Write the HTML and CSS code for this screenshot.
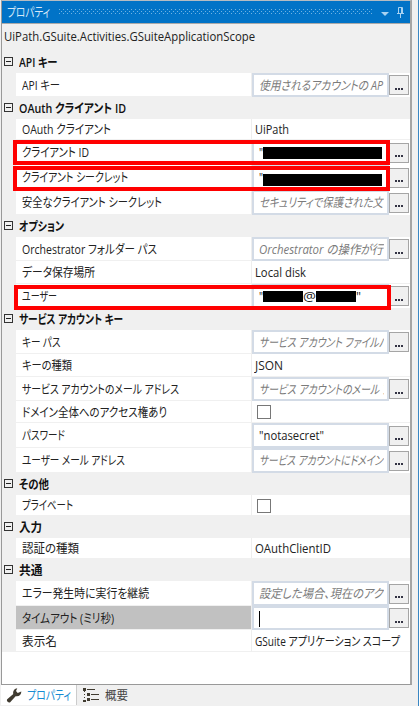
FILE: index.html
```html
<!DOCTYPE html>
<html lang="ja">
<head>
<meta charset="utf-8">
<title>プロパティ</title>
<link rel="stylesheet" href="styles.css">
</head>
<body>
<div class="window">
  <section class="panel">
    <header class="titlebar">
      <span class="title"><span data-w="43">プロパティ</span></span>
      <svg class="grip" width="314" height="6"><defs><pattern id="d" width="4" height="4" patternUnits="userSpaceOnUse"><rect width="1" height="1"/><rect x="2" y="2" width="1" height="1"/></pattern></defs><rect class="dots" width="314" height="5" fill="url(#d)"/></svg>
      <svg class="tools" width="30" height="16" viewBox="0 0 30 16"><path class="arrow" d="M1 8h8L5 12z"/><path class="pin" d="M18.500 9.500V3.500h4v6M17 9.500h7M20.500 10v4M21.500 4v5"/></svg>
    </header>
    <div class="type"><span data-w="251">UiPath.GSuite.Activities.GSuiteApplicationScope</span></div>
    <main class="grid" id="grid"></main>
  </section>
  <nav class="tabs">
    <div class="tab active"><svg width="16" height="16" viewBox="0 0 16 16"><path class="wrench" d="M1.200 12.200 7.300 7C6.500 4.500 8 1.700 11.300 1.200L10 4l1.700 1.900L15.300 4.500C15.500 7.500 13 10 9.600 9.200L4.200 15.200C2.500 16.200 0 14 1.200 12.200z"/></svg><span data-w="44">プロパティ</span></div>
    <div class="tab"><svg width="17" height="16" viewBox="0 0 17 16"><path class="tree" d="M0 1h3v3H0zM4 2h8v1H4zM4 6h3v3H4zM8 7h8v1H8zM4 11h3v3H4zM8 12h8v1H8zM0 13h3v2H0zM1 4h1v1H1zM1 7h1v1H1zM1 10h1v1H1z"/></svg><span data-w="23">概要</span></div>
  </nav>
</div>
<script src="main.js"></script>
</body>
</html>
```
FILE: styles.css
```css
* { box-sizing: border-box; }
body { margin: 0; background: #f0f0f0; color: #222; font: 12.5px/16px "Open Sans", "Noto Sans CJK JP", sans-serif; font-feature-settings: "palt"; overflow: hidden; }
svg { display: block; flex: none; }
.window { width: 419px; height: 706px; border-right: 1px solid #3987c4; background: #f0f0f0; padding-left: 1px; }
.panel { width: 411px; height: 685px; border: 1px solid #999; border-right: 2px solid #a5a5a5; border-top-color: #b5bcc2; background: #fff; display: flex; flex-direction: column; }
.titlebar { height: 22px; flex: none; background: #0173c7; color: #d5e9f8; display: flex; align-items: center; padding-left: 5px; }
.title { width: 52px; padding-top: 2px; }
.dots { opacity: .6; }
#d rect { fill: #b8dcf5; }
.tools { margin-left: 7px; }
.arrow { fill: #a8d2f1; }
.pin { fill: none; stroke: #a8d2f1; stroke-width: 1; }
.type { height: 28px; padding: 5px 0 0 2px; background: #f0f0f0; border-top: 1px solid #aaa; flex: none; }
[data-w] { display: inline-block; white-space: nowrap; transform-origin: 0 50%; }
.category { display: flex; align-items: center; background: #f0f0f0; padding-left: 2px; font-weight: 600; color: #111; }
.category [data-w] { padding-top: 1px; }
.toggle { flex: none; width: 9px; height: 9px; border: 1px solid #333; margin: 0 6px 1px 0; display: flex; align-items: center; justify-content: center; }
.toggle::before { content: ""; width: 5px; height: 1px; background: #222; }
.row { position: relative; display: grid; grid-template-columns: 14px 235px 1fr; background: #fff; }
.row::before { content: ""; background: #f0f0f0; }
.name { padding: 2px 0 0 5.500px; display: flex; align-items: center; border-bottom: 1px solid #f0f0f0; min-width: 0; }
.selected .name { background: #c1c1c1; }
.value { display: flex; align-items: center; min-width: 0; border-left: 1px solid #eee; border-bottom: 1px solid #f0f0f0; padding: 2px 0 0 3px; }
.value.edit { padding: 0; border-bottom: 0; }
.field { width: 137px; height: 100%; border: 2px solid #d3dbe6; background: #fff; padding-left: 5px; display: flex; align-items: center; }
.clip { width: 125px; height: 100%; padding-top: 1px; overflow: hidden; display: flex; align-items: center; white-space: nowrap; }
.hint { color: #7b7b7b; font-style: italic; }
.more { width: 20px; height: 20px; border: 1px solid #a5a5a5; background: #f0f0f0; padding: 0; display: flex; justify-content: center; align-items: center; font: inherit; }
.more svg { margin-top: 7px; }
.more rect { fill: #334; }
.check { width: 14px; height: 14px; border: 1px solid #777; background: #fff; margin: -1px 0 0 2px; }
.mark { position: absolute; z-index: 1; inset: 0 auto auto 11px; width: 377px; height: 25px; border: 4px solid #f00; }
.mark.low { top: 1px; }
.mark.user { left: 12px; top: 1px; }
.redact { flex: none; background: #000; width: 119px; height: 12px; }
.redact.low { margin-top: 3px; }
.redact.short { width: 40px; height: 11px; }
.caret { width: 1px; height: 16px; background: #000; }
.tabs { display: flex; height: 20px; color: #444; }
.tab { display: flex; align-items: center; padding: 0 0 0 6px; gap: 4.500px; height: 20px; }
.tab [data-w] { padding-top: 1px; }
.tab.active { width: 76px; background: #fff; color: #168bd2; border-right: 1px solid #ccc; padding-left: 5px; }
.wrench { fill: #403b30; }
.tree { fill: #403b30; }
```
FILE: main.js
```js
// Each entry: [kind, height, label, label width, value, value width, mark]
const rows = [
  ["cat", 22, "API キー", 38.5],
  ["hint", 24, "API キー", 38, "使用されるアカウントの AP", 124],
  ["cat", 22, "OAuth クライアント ID", 107],
  ["text", 21, "OAuth クライアント", 89, "UiPath", 34],
  ["secret", 25, "クライアント ID", 67, "", 0, "mark"],
  ["secret", 25, "クライアント シークレット", 106, "low", 0, "mark low"],
  ["hint", 25, "安全なクライアント シークレット", 140, "セキュリティで保護された文", 124],
  ["cat", 22, "オプション", 45],
  ["hint", 24, "Orchestrator フォルダー パス", 135, "Orchestrator の操作が行", 124],
  ["text", 23, "データ保存場所", 73, "Local disk", 51],
  ["user", 24, "ユーザー", 35, "", 0, "mark user"],
  ["cat", 22, "サービス アカウント キー", 104],
  ["hint", 24, "キー パス", 38.5, "サービス アカウント ファイルパ", 129],
  ["text", 23, "キーの種類", 50, "JSON", 28],
  ["hint", 24, "サービス アカウントのメール アドレス", 157, "サービス アカウントのメール ア", 132],
  ["check", 22, "ドメイン全体へのアクセス権あり", 145],
  ["edit", 25, "パスワード", 43, '"notasecret"', 65],
  ["hint", 25, "ユーザー メール アドレス", 103, "サービス アカウントにドメイン", 124],
  ["cat", 22, "その他", 30],
  ["check", 21, "プライベート", 51],
  ["cat", 22, "入力", 23],
  ["text", 21, "認証の種類", 57, "OAuthClientID", 76],
  ["cat", 22, "共通", 23.5],
  ["hint", 25, "エラー発生時に実行を継続", 127, "設定した場合、現在のアク", 124],
  ["caret", 24, "タイムアウト (ミリ秒)", 92],
  ["text", 22, "表示名", 35, "GSuite アプリケーション スコープ", 145]
];
const fit = (text, w) => `<span data-w="${w}">${text}</span>`;
const dots = '<svg width="8" height="2"><rect width="2" height="2"/><rect x="3" width="2" height="2"/><rect x="6" width="2" height="2"/></svg>';

document.getElementById("grid").innerHTML = rows.map(([kind, h, label, lw, val, vw, mark]) => {
  if (kind === "cat") return `<div class="category" style="height:${h}px"><i class="toggle"></i>${fit(label, lw)}</div>`;
  let body;
  if (kind === "text") body = fit(val, vw);
  else if (kind === "check") body = '<i class="check"></i>';
  else {
    const inner = {
      hint: () => `<span class="hint">${fit(val, vw)}</span>`,
      edit: () => fit(val, vw),
      caret: () => '<i class="caret"></i>',
      secret: () => `${fit('"', 4)}<i class="redact ${val}"></i>`,
      user: () => `${fit('"', 4)}<i class="redact short"></i>${fit("@", 13)}<i class="redact short"></i>${fit('"', 5)}`
    }[kind]();
    body = `<div class="field"><div class="clip">${inner}</div></div><button class="more">${dots}</button>`;
  }
  const edit = kind !== "text" && kind !== "check" ? " edit" : "";
  return `<div class="row${kind === "caret" ? " selected" : ""}" style="height:${h}px"><div class="name">${fit(label, lw)}</div><div class="value${edit}">${body}</div>${mark ? `<b class="${mark}"></b>` : ""}</div>`;
}).join("");

document.querySelectorAll("[data-w]").forEach(el => {
  const w = +el.dataset.w, natural = el.getBoundingClientRect().width;
  el.style.transform = `scaleX(${w / natural})`;
  el.style.marginRight = `${w - natural}px`;
});
```
